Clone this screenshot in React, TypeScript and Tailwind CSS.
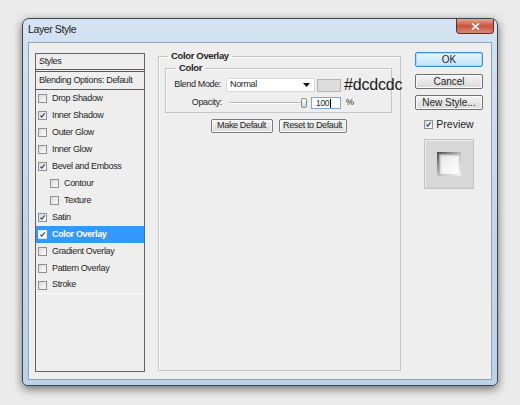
import React from "react";

const SANS = "font-['Liberation_Sans',Arial,sans-serif]";
// Compact UI text: small Arial-metric face, tightened to read like a condensed dialog font
const UI = "font-['Liberation_Sans',Arial,sans-serif] text-[9px] tracking-[-0.35px]";

function CheckBox({ checked, light }: { checked?: boolean; light?: boolean }) {
  return (
    <span
      className={`relative inline-flex w-[9px] h-[9px] shrink-0 items-center justify-center border ${
        light ? "border-[#d8e8ff] bg-white" : "border-[#8e8f8f] bg-gradient-to-br from-[#dcdcdc] to-[#fbfbfb]"
      }`}
    >
      {checked && (
        <svg viewBox="0 0 9 9" className="w-[9px] h-[9px]">
          <path d="M1.8 4.6 L3.6 6.6 L7.2 1.8" fill="none" stroke="#2a3d78" strokeWidth="1.5" />
        </svg>
      )}
    </span>
  );
}

const styleRows: { label: string; checked?: boolean; indent?: boolean; selected?: boolean }[] = [
  { label: "Drop Shadow" },
  { label: "Inner Shadow", checked: true },
  { label: "Outer Glow" },
  { label: "Inner Glow" },
  { label: "Bevel and Emboss", checked: true },
  { label: "Contour", indent: true },
  { label: "Texture", indent: true },
  { label: "Satin", checked: true },
  { label: "Color Overlay", checked: true, selected: true },
  { label: "Gradient Overlay" },
  { label: "Pattern Overlay" },
  { label: "Stroke" },
];

function StylesList() {
  return (
    <div className={`w-[110px] h-[319px] mt-[1px] shrink-0 border border-[#646464] bg-[#eeeeee] ${UI} text-[#1e1e1e] whitespace-nowrap`}>
      <div className="h-[18px] flex items-center pl-[3px] border-b-[3px] border-double border-[#5c5c5c]">Styles</div>
      <div className="h-[18px] flex items-center pl-[3px] border-b border-[#5c5c5c]">Blending Options: Default</div>
      {styleRows.map((r, i) => (
        <div
          key={r.label}
          className={`h-[17px] flex items-center gap-[5px] ${r.indent ? "pl-[14px]" : "pl-[2px]"} ${
            r.selected ? "bg-[#3399ff] text-white font-bold" : ""
          } ${i === styleRows.length - 1 ? "border-b border-[#fafafa]" : ""}`}
        >
          <CheckBox checked={r.checked} light={r.selected} />
          <span>{r.label}</span>
        </div>
      ))}
    </div>
  );
}

function SmallButton({ children, w }: { children: React.ReactNode; w: string }) {
  return (
    <div
      className={`${w} h-[14px] flex items-center justify-center whitespace-nowrap rounded-[2px] border border-[#7a7a7a] bg-gradient-to-b from-[#f5f5f5] to-[#dadada] shadow-[inset_0_0_0_1px_#fbfbfb] text-[#1e1e1e]`}
    >
      {children}
    </div>
  );
}

function DialogButton({ children, primary }: { children: React.ReactNode; primary?: boolean }) {
  return (
    <div
      className={`w-[68px] h-[15px] flex items-center justify-center whitespace-nowrap rounded-[2px] border ${SANS} text-[10px] text-[#1e1e1e] ${
        primary
          ? "border-[#3c8fce] bg-gradient-to-b from-[#eaf6fd] to-[#bfe3f8] shadow-[inset_0_0_0_1px_#a7dcf6]"
          : "border-[#707070] bg-gradient-to-b from-[#f4f4f4] to-[#d9d9d9] shadow-[inset_0_0_0_1px_#fcfcfc]"
      }`}
    >
      {children}
    </div>
  );
}

function ColorOverlayPanel() {
  return (
    <fieldset className={`w-[243px] min-w-0 h-[321px] mt-[-2px] shrink-0 border border-[#c6c6c6] shadow-[inset_1px_1px_0_#fbfbfb] ${UI} text-[#1e1e1e] whitespace-nowrap`}>
      <legend className="ml-[9px] px-[3px] leading-[12px] font-bold text-[9.5px]">Color Overlay</legend>
      <div className="pl-[6px] pr-[8px]">
        <fieldset className="h-[51px] min-w-0 border border-[#c6c6c6] shadow-[inset_1px_1px_0_#fbfbfb]">
          <legend className="ml-[10px] px-[3px] leading-[12px] font-bold text-[9.5px]">Color</legend>
          <div className="pt-[4px] flex flex-col gap-[5px]">
            <div className="flex items-center h-[14px]">
              <span className="w-[55px] shrink-0 text-right">Blend Mode:</span>
              <div className="ml-[5px] w-[89px] h-[14px] shrink-0 bg-white border border-[#dadada] flex items-center justify-between pl-[3px] pr-[4px]">
                <span>Normal</span>
                <svg viewBox="0 0 7 4" className="w-[7px] h-[4px]">
                  <path d="M0 0 H7 L3.5 4 Z" fill="#111" />
                </svg>
              </div>
              <div className="ml-[2px] w-[24px] h-[13px] shrink-0 bg-[#dcdcdc] border border-[#b4b4b4]" />
              <span className={`ml-[3px] ${SANS} text-[16px] tracking-[-0.2px] leading-[14px] text-[#1a1a1a]`}>#dcdcdc</span>
            </div>
            <div className="flex items-center h-[12px]">
              <span className="w-[56px] shrink-0 text-right">Opacity:</span>
              <div className="ml-[7px] w-[79px] h-[10px] shrink-0 relative flex items-center">
                <div className="w-full h-[2px] border-t border-[#b8b8b8] border-b border-b-[#ffffff]" />
                <div className="absolute right-[1px] top-[0px] w-[6px] h-[10px] rounded-[2px] border border-[#8a8a8a] bg-gradient-to-b from-[#ffffff] to-[#d4d4d4]" />
              </div>
              <div className="ml-[3px] w-[30px] h-[12px] shrink-0 bg-white border border-[#7aa7d6] flex items-center pl-[4px] text-[8.5px]">
                <span>100</span>
                <span className="ml-[1px] w-px h-[9px] bg-black" />
              </div>
              <span className="ml-[5px]">%</span>
            </div>
          </div>
        </fieldset>
        <div className="mt-[6px] flex justify-center gap-[6px]">
          <SmallButton w="w-[62px]">Make Default</SmallButton>
          <SmallButton w="w-[68px]">Reset to Default</SmallButton>
        </div>
      </div>
    </fieldset>
  );
}

function PreviewSwatch() {
  return (
    <div className="w-[50px] h-[50px] bg-[#d7d7d7] border border-[#c2c2c2] shadow-[inset_1px_1px_0_#ececec] flex items-center justify-center">
      <div className="w-[24px] h-[24px] bg-gradient-to-br from-[#4a4a4a] via-[#bdbdbd] to-[#f4f4f4] p-[2px]">
        <div className="w-full h-full bg-gradient-to-br from-[#e6e6e6] to-[#ffffff] shadow-[inset_1px_1px_2px_#9a9a9a]" />
      </div>
    </div>
  );
}

export default function App() {
  return (
    <div className="w-[520px] h-[405px] bg-[#ebebeb] pt-[18px] pl-[22px] overflow-hidden">
      <div className="w-[476px] h-[368px] rounded-t-[7px] rounded-b-[5px] border border-[#3d4650] bg-gradient-to-b from-[#d5e3f2] via-[#c4d7ec] to-[#bcd2ea] shadow-[0_3px_10px_rgba(0,0,0,0.55)] flex flex-col">
        <div className="h-[23px] flex items-start justify-between pl-[5px] pr-[3px] shrink-0">
          <span className={`mt-[3px] ${SANS} text-[10.5px] tracking-[-0.4px] text-[#1b1b1b]`}>Layer Style</span>
          <div className="w-[38px] h-[15px] rounded-b-[4px] border border-t-0 border-[#6b2a22] bg-gradient-to-b from-[#e9a393] via-[#c8533f] to-[#d98a78] flex items-center justify-center">
            <svg viewBox="0 0 10 8" className="w-[9px] h-[7px]">
              <path d="M1 0.5 L9 7.5 M9 0.5 L1 7.5" stroke="#ffffff" strokeWidth="2" />
            </svg>
          </div>
        </div>
        <div className="flex-1 mx-[5px] mb-[5px] border border-[#8ea3ba] bg-[#eeeeee] flex items-start pl-[6px] pt-[9px]">
          <StylesList />
          <div className="ml-[13px] shrink-0">
            <ColorOverlayPanel />
          </div>
          <div className="ml-[14px] shrink-0 flex flex-col items-center">
            <DialogButton primary>OK</DialogButton>
            <div className="h-[7px]" />
            <DialogButton>Cancel</DialogButton>
            <div className="h-[6px]" />
            <DialogButton>New Style...</DialogButton>
            <div className={`mt-[7px] flex items-center gap-[3px] ${SANS} text-[10.5px] text-[#1e1e1e]`}>
              <CheckBox checked />
              <span>Preview</span>
            </div>
            <div className="mt-[6px]">
              <PreviewSwatch />
            </div>
          </div>
        </div>
      </div>
    </div>
  );
}
